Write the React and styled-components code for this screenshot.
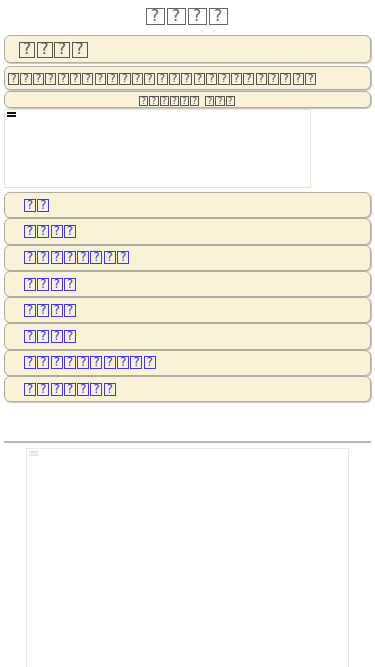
import React from 'react';
import styled, { createGlobalStyle } from 'styled-components';

const Global = createGlobalStyle`
  body {
    margin: 0;
    padding: 0 4px;
    background: #fff;
    font-family: "DejaVu Sans", "Liberation Sans", sans-serif;
  }
`

// a missing-glyph box, as the page shows its unreadable text
const Tofu = styled.span`
  display: inline-block;
  box-sizing: border-box;
  width: ${p => p.w}px;
  height: ${p => p.h}px;
  margin-right: ${p => p.gap}px;
  border: ${p => p.b}px solid currentColor;
  font-size: ${p => p.h - 1}px;
  line-height: ${p => p.h - 2 * p.b}px;
  text-align: center;
  vertical-align: middle;
  font-weight: normal;
`
const Word = styled.span`
  display: inline-block;
  white-space: nowrap;
  margin-right: ${p => p.space}px;
  &:last-child { margin-right: 0; }
`

function Boxes({ n, w, h, gap = 1.5, b = 1, space = 4 }) {
  const words = Array.isArray(n) ? n : [n]
  return words.map((c, i) => (
    <Word key={i} space={space}>
      {Array.from({ length: c }, (_, j) => (
        <Tofu key={j} w={w} h={h} gap={gap} b={b}>?</Tofu>
      ))}
    </Word>
  ))
}

const Title = styled.h1`
  margin: 0;
  height: 35px;
  padding-top: 7px;
  box-sizing: border-box;
  text-align: center;
  font-size: 16px;
  line-height: 17px;
  font-weight: normal;
  color: #666;
`
const Bar = styled.div`
  display: flex;
  align-items: center;
  justify-content: ${p => p.center ? 'center' : 'flex-start'};
  box-sizing: border-box;
  background: #faf1d9;
  border: 1px solid #b0aca0;
  border-radius: 6px;
  box-shadow: 1px 1px 1px #c8c4b8;
  margin-bottom: ${p => p.gap ?? 2}px;
  color: #555;
  height: ${p => p.h}px;
  padding-left: ${p => p.pad || 0}px;
  white-space: nowrap;
  overflow: hidden;
`
const Frame = styled.div`
  width: 307px;
  height: 79px;
  box-sizing: border-box;
  border: 1px solid #e6e4d6;
  position: relative;
  margin: 1px 0 4px;
`
const Burger = styled.div`
  position: absolute;
  top: 2px;
  left: 2px;
  width: 9px;
  height: 5px;
  border-top: 2px solid ${p => p.faint ? '#e4e4e4' : '#111'};
  border-bottom: 2px solid ${p => p.faint ? '#e4e4e4' : '#111'};
  box-sizing: border-box;
`
const Menu = styled.nav`
  display: flex;
  flex-direction: column;
`
const Item = styled.div`
  display: flex;
  align-items: center;
  box-sizing: border-box;
  background: #faf1d9;
  border: 1px solid #b0aca0;
  border-radius: 6px;
  box-shadow: 1px 1px 1px #c8c4b8;
  height: 26.3px;
  padding-left: 19px;
`
const Link = styled.a`
  color: #3a3af0;
  text-decoration: none;
  line-height: 0;
`
const Rule = styled.hr`
  margin: 39px 0 5px;
  border: 0;
  border-top: 2px solid #b4b4b4;
`
const Embed = styled.div`
  margin: 0 22px;
  height: 240px;
  border: 1px solid #e8e8e8;
  position: relative;
`

const items = [2, 4, 8, 4, 4, 4, 10, 7]

export default function App() {
  return (
    <>
      <Global />
      <Title><Boxes n={4} w={19} h={17} gap={2} b={1.5} /></Title>
      <Bar h={28} pad={14} gap={3}><Boxes n={4} w={16} h={16} gap={1.5} b={1.5} /></Bar>
      <Bar h={24} pad={3} gap={1}><Boxes n={25} w={11.2} h={12} gap={1.2} /></Bar>
      <Bar h={17} center gap={0}><Boxes n={[6, 3]} w={9.2} h={10} gap={1} space={5} /></Bar>
      <Frame><Burger /></Frame>
      <Menu>
        {items.map((n, i) => (
          <Item key={i}>
            <Link href="#"><Boxes n={n} w={12} h={13} gap={1.3} b={1.5} /></Link>
          </Item>
        ))}
      </Menu>
      <Rule />
      <Embed><Burger faint /></Embed>
    </>
  );
}
